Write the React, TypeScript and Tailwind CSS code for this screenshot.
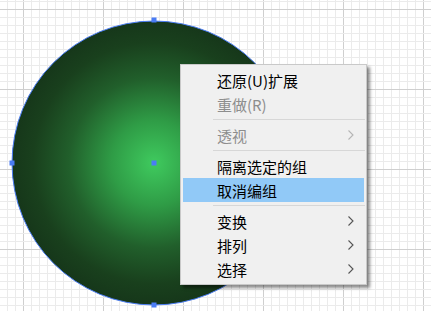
import React from "react";

type Item =
  | { kind: "item"; label: string; disabled?: boolean; sub?: boolean; active?: boolean }
  | { kind: "sep" };

const items: Item[] = [
  { kind: "item", label: "还原(U)扩展" },
  { kind: "item", label: "重做(R)", disabled: true },
  { kind: "sep" },
  { kind: "item", label: "透视", disabled: true, sub: true },
  { kind: "sep" },
  { kind: "item", label: "隔离选定的组" },
  { kind: "item", label: "取消编组", active: true },
  { kind: "sep" },
  { kind: "item", label: "变换", sub: true },
  { kind: "item", label: "排列", sub: true },
  { kind: "item", label: "选择", sub: true },
];

const Chevron = ({ disabled }: { disabled?: boolean }) => (
  <svg width="6" height="10" viewBox="0 0 6 10" className="mr-[10px]">
    <polyline
      points="0.5,0.5 5,5 0.5,9.5"
      fill="none"
      stroke={disabled ? "#b5b5b5" : "#555555"}
      strokeWidth="1.1"
    />
  </svg>
);

// canvas with grid, circle and selection handles
const Canvas = () => {
  const minorX: number[] = [];
  for (let x = 7; x < 431; x += 8) minorX.push(x);
  const minorY: number[] = [];
  for (let y = 1; y < 311; y += 8) minorY.push(y);

  return (
    <svg width="431" height="311" className="absolute left-0 top-0">
      <defs>
        <radialGradient id="ball" cx="154" cy="163" r="142" gradientUnits="userSpaceOnUse">
          <stop offset="0" stopColor="#3fca5e" />
          <stop offset="0.3" stopColor="#2f9c46" />
          <stop offset="0.6" stopColor="#215f2b" />
          <stop offset="0.85" stopColor="#19401d" />
          <stop offset="1" stopColor="#16371a" />
        </radialGradient>
      </defs>
      <rect width="431" height="311" fill="#ffffff" />
      {minorX.map((x) => (
        <line
          key={"x" + x}
          x1={x + 0.5}
          y1="0"
          x2={x + 0.5}
          y2="311"
          stroke={(x - 23) % 80 === 0 ? "#cfcfcf" : "#ebebeb"}
          strokeWidth="1"
        />
      ))}
      {minorY.map((y) => (
        <line
          key={"y" + y}
          x1="0"
          y1={y + 0.5}
          x2="431"
          y2={y + 0.5}
          stroke={(y - 9) % 80 === 0 ? "#cfcfcf" : "#ebebeb"}
          strokeWidth="1"
        />
      ))}
      <circle cx="154" cy="163" r="142" fill="url(#ball)" stroke="#4a7cf2" strokeWidth="1" />
      {[
        [154, 20],
        [12, 163],
        [154, 163],
        [154, 305],
      ].map(([x, y]) => (
        <rect key={x + "-" + y} x={x - 2.5} y={y - 2.5} width="5" height="5" fill="#4a7cf5" />
      ))}
    </svg>
  );
};

export default function App() {
  return (
    <div className="relative w-[431px] h-[311px] overflow-hidden bg-white">
      <Canvas />
      <div className="absolute left-[180px] top-[64px] w-[187px] bg-[#f0f0f0] border border-[#c9c9c9] shadow-[3px_3px_3px_rgba(0,0,0,0.45)] py-[3px] font-['Noto_Sans_CJK_SC','Noto_Sans',sans-serif] text-[15px] leading-none">
        {items.map((it, i) =>
          it.kind === "sep" ? (
            <div key={i} className="h-[7px] flex items-center pl-[32px] pr-[1px]">
              <div className="h-px w-full bg-[#d7d7d7]" />
            </div>
          ) : (
            <div
              key={i}
              className={
                "h-[24px] mx-[2px] flex items-center justify-between pl-[34px] " +
                (it.active ? "bg-[#91c9f7] " : "") +
                (it.disabled ? "text-[#8d8d8d]" : "text-black")
              }
            >
              <span>{it.label}</span>
              {it.sub && <Chevron disabled={it.disabled} />}
            </div>
          )
        )}
      </div>
    </div>
  );
}
